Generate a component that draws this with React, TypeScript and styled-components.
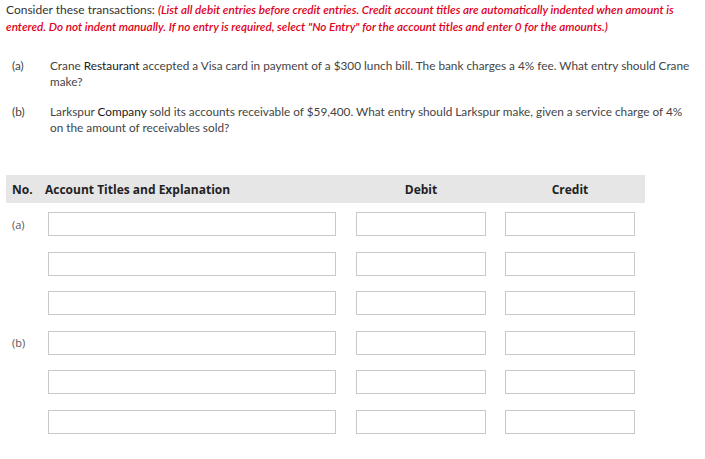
import React from "react";
import styled, { createGlobalStyle } from "styled-components";

const Global = createGlobalStyle`
  html, body { margin: 0; padding: 0; background: #fff; }
  body { font-family: Lato, "Open Sans", sans-serif; }
`;

const Page = styled.div`
  width: 705px;
  padding: 1px 0 0 6px;
  box-sizing: border-box;
`;

const Instructions = styled.p`
  margin: 0;
  font-size: 12px;
  line-height: 17px;
  color: #333;
  width: 690px;
`;

const Warn = styled.em`
  color: #e0001b;
  font-weight: 600;
  font-size: 11.7px;
  font-style: italic;
`;

const Questions = styled.div`
  display: flex;
  flex-direction: column;
  gap: 14px;
  margin-top: 23px;
`;

const Question = styled.div`
  display: grid;
  grid-template-columns: 44px 646px;
  font-size: 11.8px;
  line-height: 16px;
  color: #444;
`;

const QLabel = styled.span`
  padding-left: 6px;
`;

const Name = styled.span`
  color: #1a1a1a;
`;

const Table = styled.div`
  margin-top: 39px;
  width: 639px;
`;

const Grid = styled.div`
  display: grid;
  grid-template-columns: 42px 288px 20px 130px 19px 130px 10px;
  align-items: center;
`;

const Header = styled(Grid)`
  height: 28px;
  background: #e6e6e6;
  font-family: "Open Sans", sans-serif;
  font-weight: 700;
  font-size: 12px;
  color: #222;
`;

const HCell = styled.div<{ $center?: boolean; $pad?: number; $shift?: number }>`
  text-align: ${(p) => (p.$center ? "center" : "left")};
  padding-left: ${(p) => p.$pad ?? 0}px;
  margin-left: ${(p) => p.$shift ?? 0}px;
  white-space: nowrap;
`;

const Rows = styled.div`
  display: flex;
  flex-direction: column;
  gap: 15.6px;
  margin-top: 9px;
`;

const RowLabel = styled.div`
  padding-left: 6px;
  font-family: "Open Sans", sans-serif;
  font-size: 11px;
  color: #555;
`;

const Input = styled.input`
  display: block;
  box-sizing: border-box;
  width: 100%;
  height: 24px;
  margin: 0;
  border: 1px solid #c9c9c9;
  background: #fff;
  outline: none;
`;

const rows = ["(a)", "", "", "(b)", "", ""];

export default function App() {
  return (
    <Page>
      <Global />
      <Instructions>
        Consider these transactions:{" "}
        <Warn>
          (List all debit entries before credit entries. Credit account titles are automatically indented when amount is
          entered. Do not indent manually. If no entry is required, select "No Entry" for the account titles and enter 0 for
          the amounts.)
        </Warn>
      </Instructions>
      <Questions>
        <Question>
          <QLabel>(a)</QLabel>
          <span>
            Crane <Name>Restaurant</Name> accepted a Visa card in payment of a $300 lunch bill. The bank charges a 4% fee.
            What entry should Crane make?
          </span>
        </Question>
        <Question>
          <QLabel>(b)</QLabel>
          <span>
            Larkspur <Name>Company</Name> sold its accounts receivable of $59,400. What entry should Larkspur make, given a
            service charge of 4% on the amount of receivables sold?
          </span>
        </Question>
      </Questions>
      <Table>
        <Header>
          <HCell $pad={6}>No.</HCell>
          <HCell $shift={-3}>Account Titles and Explanation</HCell>
          <span />
          <HCell $center>Debit</HCell>
          <span />
          <HCell $center>Credit</HCell>
          <span />
        </Header>
        <Rows>
          {rows.map((l, i) => (
            <Grid key={i}>
              <RowLabel>{l}</RowLabel>
              <Input />
              <span />
              <Input />
              <span />
              <Input />
              <span />
            </Grid>
          ))}
        </Rows>
      </Table>
    </Page>
  );
}
